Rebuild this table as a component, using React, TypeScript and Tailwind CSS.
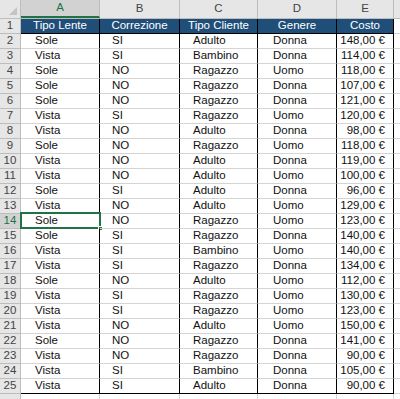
const rows: [string, string, string, string, string][] = [
  ['Sole', 'SI', 'Adulto', 'Donna', '148,00 €'],
  ['Vista', 'SI', 'Bambino', 'Donna', '114,00 €'],
  ['Sole', 'NO', 'Ragazzo', 'Uomo', '118,00 €'],
  ['Sole', 'NO', 'Ragazzo', 'Donna', '107,00 €'],
  ['Sole', 'NO', 'Ragazzo', 'Donna', '121,00 €'],
  ['Vista', 'SI', 'Ragazzo', 'Uomo', '120,00 €'],
  ['Vista', 'NO', 'Adulto', 'Donna', '98,00 €'],
  ['Sole', 'NO', 'Ragazzo', 'Uomo', '118,00 €'],
  ['Vista', 'NO', 'Adulto', 'Donna', '119,00 €'],
  ['Vista', 'NO', 'Adulto', 'Uomo', '100,00 €'],
  ['Sole', 'SI', 'Adulto', 'Donna', '96,00 €'],
  ['Vista', 'NO', 'Adulto', 'Uomo', '129,00 €'],
  ['Sole', 'NO', 'Ragazzo', 'Uomo', '123,00 €'],
  ['Sole', 'SI', 'Ragazzo', 'Donna', '140,00 €'],
  ['Vista', 'SI', 'Bambino', 'Uomo', '140,00 €'],
  ['Vista', 'SI', 'Ragazzo', 'Donna', '134,00 €'],
  ['Sole', 'NO', 'Adulto', 'Uomo', '112,00 €'],
  ['Vista', 'SI', 'Ragazzo', 'Uomo', '130,00 €'],
  ['Vista', 'SI', 'Ragazzo', 'Uomo', '123,00 €'],
  ['Vista', 'NO', 'Adulto', 'Uomo', '150,00 €'],
  ['Sole', 'NO', 'Ragazzo', 'Donna', '141,00 €'],
  ['Vista', 'NO', 'Ragazzo', 'Donna', '90,00 €'],
  ['Vista', 'SI', 'Bambino', 'Donna', '105,00 €'],
  ['Vista', 'SI', 'Adulto', 'Donna', '90,00 €'],
];

const widths = ['w-[79px]', 'w-[80px]', 'w-[78px]', 'w-[79px]', 'w-[57px]'];
const letters = ['A', 'B', 'C', 'D', 'E'];
const headers = ['Tipo Lente', 'Correzione', 'Tipo Cliente', 'Genere', 'Costo'];
const indents = ['pl-[14px]', 'pl-[12px]', 'pl-[13px]', 'pl-[15px]', ''];

export default function App() {
  return (
    <div
      className="w-[400px] h-[399px] overflow-hidden bg-white text-[11.5px] text-[#111]"
      style={{ fontFamily: '"Liberation Sans", Arial, sans-serif' }}
    >
      {/* column letters */}
      <div className="flex h-[19px] bg-[#e6e6e6] border-b border-[#bdbdbd]">
        <div className="w-[21px] shrink-0 border-r border-[#bdbdbd] flex items-end justify-end p-[3px]">
          <div className="w-0 h-0 border-l-[8px] border-l-transparent border-b-[8px] border-b-[#c4c4c4]" />
        </div>
        {letters.map((l, i) => (
          <div
            key={l}
            className={`${widths[i]} shrink-0 flex items-center justify-center border-r border-[#bdbdbd] ${
              i === 0 ? 'bg-[#d2d2d2] text-[#217346] border-b-2 border-b-[#217346]' : 'text-[#444]'
            }`}
          >
            {l}
          </div>
        ))}
        <div className="flex-1" />
      </div>

      {/* header row */}
      <div className="flex h-[15px]">
        <div className="w-[21px] shrink-0 bg-[#e6e6e6] border-r border-b border-[#bdbdbd] flex items-center justify-center text-[#444]">
          1
        </div>
        {headers.map((h, i) => (
          <div
            key={h}
            className={`${widths[i]} shrink-0 bg-[#1f4e78] text-white flex items-center justify-center border-r border-b border-black`}
          >
            {h}
          </div>
        ))}
        <div className="flex-1 border-b border-[#d4d4d4]" />
      </div>

      {rows.map((r, ri) => {
        const n = ri + 2;
        const sel = n === 14;
        const last = n === 25;
        return (
          <div key={n} className="flex h-[15px]">
            <div
              className={`w-[21px] shrink-0 border-r border-b border-[#bdbdbd] flex items-center justify-center ${
                sel ? 'bg-[#d2d2d2] text-[#217346]' : 'bg-[#e6e6e6] text-[#444]'
              }`}
            >
              {n}
            </div>
            {r.map((v, ci) => (
              <div
                key={ci}
                className={`${widths[ci]} shrink-0 relative flex items-center border-r border-black border-b ${
                  last ? 'border-b-black' : 'border-b-[#d4d4d4]'
                } ${ci === 4 ? 'justify-end pr-[8px]' : indents[ci]}`}
              >
                {v}
                {sel && ci === 0 && (
                  <div className="absolute left-[-1px] top-[-2px] right-[-2px] bottom-[-1px] border-2 border-[#217346]">
                    <div className="absolute right-[-4px] bottom-[-4px] w-[5px] h-[5px] bg-[#217346] border border-white" />
                  </div>
                )}
              </div>
            ))}
            <div className="flex-1 border-b border-[#d4d4d4]" />
          </div>
        );
      })}
      <div className="flex h-[15px]">
        <div className="w-[21px] shrink-0 bg-[#e6e6e6] border-r border-[#bdbdbd]" />
        {widths.map((w, i) => (
          <div key={i} className={`${w} shrink-0 border-r border-[#d4d4d4]`} />
        ))}
      </div>
    </div>
  );
}
